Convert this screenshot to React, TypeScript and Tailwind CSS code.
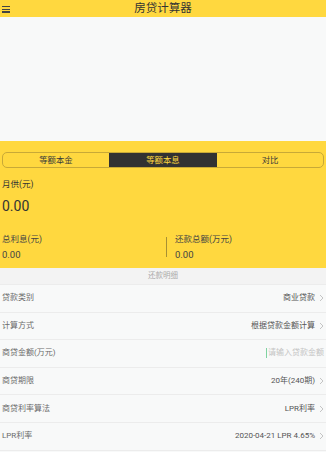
import React from "react";

const font = { fontFamily: 'Roboto, "Noto Sans CJK SC", sans-serif' };

function Chevron() {
  return (
    <svg width="5" height="8" viewBox="0 0 5 8" className="ml-[4px]">
      <path d="M1 1 L4 4 L1 7" fill="none" stroke="#c4c4c4" strokeWidth="1" />
    </svg>
  );
}

function Row({ label, value, placeholder, chevron = true }: { label: string; value: string; placeholder?: boolean; chevron?: boolean }) {
  return (
    <div className="flex h-[27.6px] items-center justify-between border-b border-[#ececec] pl-[2px] pr-[2px]">
      <span className="text-[8px] leading-none text-[#6b6b6b]">{label}</span>
      <div className="flex items-center">
        {placeholder ? (
          <span className="flex items-center text-[8px] leading-none text-[#c4c4c4]">
            <span className="mr-[1px] inline-block h-[10px] w-[1.5px] bg-[#7fd3a0]" />
            {value}
          </span>
        ) : (
          <span className="text-[8px] leading-none text-[#555555]">{value}</span>
        )}
        {chevron && !placeholder ? <Chevron /> : null}
      </div>
    </div>
  );
}

export default function App() {
  return (
    <div className="h-[452px] w-[326px] overflow-hidden bg-[#f8f9f9]" style={font}>
      <div className="relative flex h-[17px] items-center justify-center bg-[#ffd83f]">
        <div className="absolute left-[2px] top-[6px] flex flex-col gap-[1.5px]">
          <div className="h-[1.2px] w-[8px] bg-[#444]" />
          <div className="h-[1.2px] w-[8px] bg-[#444]" />
          <div className="h-[1.2px] w-[8px] bg-[#444]" />
        </div>
        <span className="text-[11.5px] leading-none text-[#333333]">房贷计算器</span>
      </div>
      <div className="h-[124px] bg-[#f8f9f9]" />
      <div className="h-[127px] bg-[#ffd83f] px-[2px] pt-[11px]">
        <div className="flex h-[16px] overflow-hidden rounded-[5px] border border-[#c8a937]">
          <div className="flex flex-1 items-center justify-center text-[8.4px] leading-none text-[#3a3a3a]">等额本金</div>
          <div className="flex w-[108px] items-center justify-center bg-[#323232] text-[8.4px] leading-none text-[#ffd83f]">等额本息</div>
          <div className="flex flex-1 items-center justify-center text-[8.4px] leading-none text-[#3a3a3a]">对比</div>
        </div>
        <div className="mt-[10px] text-[8.5px] leading-[12px] text-[#333333]">月供(元)</div>
        <div className="mt-[7px] text-[14px] leading-[18px] text-[#333333]">0.00</div>
        <div className="mt-[18px] flex">
          <div className="w-[164px]">
            <div className="text-[8.5px] leading-[12px] text-[#444]">总利息(元)</div>
            <div className="mt-[4px] text-[9.5px] leading-[12px] text-[#444]">0.00</div>
          </div>
          <div className="mt-[4px] h-[20px] w-px bg-[#a89033]" />
          <div className="pl-[8px]">
            <div className="text-[8.5px] leading-[12px] text-[#444]">还款总额(万元)</div>
            <div className="mt-[4px] text-[9.5px] leading-[12px] text-[#444]">0.00</div>
          </div>
        </div>
      </div>
      <div className="flex h-[17px] items-center justify-center border-b border-[#ececec] bg-[#f3f3f3] text-[7.5px] leading-none text-[#aaaaaa]">
        还款明细
      </div>
      <Row label="贷款类别" value="商业贷款" />
      <Row label="计算方式" value="根据贷款金额计算" />
      <Row label="商贷金额(万元)" value="请输入贷款金额" placeholder />
      <Row label="商贷期限" value="20年(240期)" />
      <Row label="商贷利率算法" value="LPR利率" />
      <Row label="LPR利率" value="2020-04-21 LPR 4.65%" />
    </div>
  );
}
